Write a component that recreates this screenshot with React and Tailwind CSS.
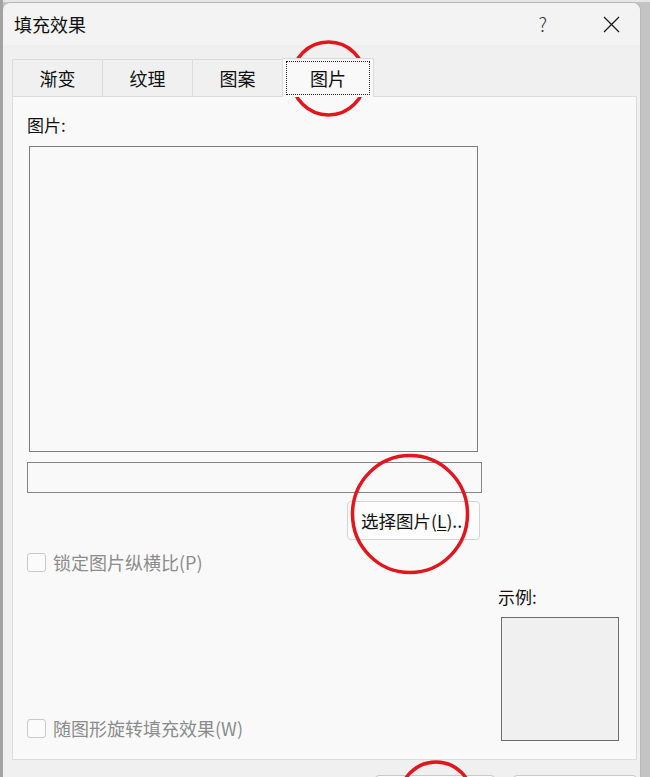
import React from "react";

const font = { fontFamily: '"Noto Sans CJK SC", "Noto Sans", sans-serif' };

const tabs = ["渐变", "纹理", "图案", "图片"];

const Check = ({ label }) => (
  <div className="flex items-center h-[19px]">
    <div className="w-[19px] h-[19px] rounded-[3px] border border-[#c9c9c9] bg-[#fbfbfb]" />
    <span className="ml-[7px] text-[18px] leading-[19px] text-[#8c8c8c] whitespace-nowrap">{label}</span>
  </div>
);

export default function App() {
  return (
    <div
      className="relative w-[650px] h-[777px] overflow-hidden bg-[#c4c4c4] border-l-[3px] border-[#a3a3a3]"
      style={font}
    >
      {/* window behind, barely visible */}
      <div className="h-[2px] bg-[#e6e6e6]" />

      <div className="w-[638px] bg-[#f0f0f0] rounded-t-[8px] border-t border-r border-[#b8b8b8] flex flex-col">
        {/* title bar */}
        <div className="shrink-0 h-[42px] flex items-center bg-[#f3f3f3] rounded-t-[8px]">
          <span className="ml-[11px] text-[18px] leading-[24px] text-[#111]">填充效果</span>
          <span className="ml-auto mr-[56px] text-[19px] leading-[24px] text-[#333] font-light">?</span>
          <svg className="mr-[20px]" width="17" height="17" viewBox="0 0 17 17">
            <path d="M1 1 L16 16 M16 1 L1 16" stroke="#1b1b1b" strokeWidth="1.3" fill="none" />
          </svg>
        </div>

        {/* tabs */}
        <div className="shrink-0 mt-[13px] ml-[9px] flex h-[38px] items-end">
          {tabs.map((t, i) => {
            const active = i === 3;
            return (
              <div
                key={t}
                className={
                  active
                    ? "relative z-10 w-[92px] h-[39px] -mb-px bg-[#f9f9f9] border border-b-0 border-[#dadada] flex items-center justify-center"
                    : "w-[90px] h-[37px] bg-[#f0f0f0] border-t border-l border-[#dcdcdc] flex items-center justify-center"
                }
              >
                {active ? (
                  <div className="w-[84px] h-[34px] border border-dotted border-[#222] flex items-center justify-center">
                    <span className="text-[18px] leading-[24px] text-[#111]">{t}</span>
                  </div>
                ) : (
                  <span className="text-[18px] leading-[24px] text-[#111]">{t}</span>
                )}
              </div>
            );
          })}
        </div>

        {/* panel */}
        <div className="shrink-0 ml-[9px] w-[625px] h-[664px] bg-[#f9f9f9] border border-[#dcdcdc] pl-[14px] pt-[16px] flex flex-col">
          <span className="text-[17px] leading-[24px] text-[#111]">图片:</span>
          <div className="mt-[9px] ml-[2px] w-[449px] h-[306px] border border-[#7d7d7d] bg-[#f9f9f9]" />
          <div className="mt-[10px] w-[455px] h-[31px] border border-[#858585] bg-[#f9f9f9]" />
          <button className="mt-[8px] ml-[320px] w-[133px] h-[39px] rounded-[4px] border border-[#d3d3d3] bg-[#fdfdfd] flex items-center pl-[13px]">
            <span className="text-[17.5px] leading-[24px] text-[#111] whitespace-nowrap">
              选择图片(<span className="underline underline-offset-2">L</span>)..
            </span>
          </button>
          <div className="mt-[13px]">
            <Check label="锁定图片纵横比(P)" />
          </div>
          <div className="mt-[13px] flex items-end">
            <div className="flex-1 pb-[3px]">
              <Check label="随图形旋转填充效果(W)" />
            </div>
            <div className="w-[138px] flex flex-col">
              <span className="text-[17px] leading-[24px] text-[#111]">示例:</span>
              <div className="mt-[8px] ml-[3px] w-[118px] h-[124px] bg-[#f0f0f0] border border-[#6c6c6c]" />
            </div>
          </div>
        </div>

        {/* bottom buttons, cut off by the screenshot */}
        <div className="shrink-0 mt-[15px] flex">
          <div className="ml-[372px] w-[120px] h-[34px] rounded-[4px] border border-[#c8c8c8] bg-[#fdfdfd]" />
          <div className="ml-[18px] w-[124px] h-[34px] rounded-[4px] border border-[#c8c8c8] bg-[#fdfdfd]" />
        </div>
      </div>

      {/* red annotation circles */}
      <svg className="absolute left-[-3px] top-0 pointer-events-none" width="650" height="777">
        <ellipse cx="328.5" cy="78.5" rx="36.5" ry="36.5" fill="none" stroke="#e3151d" strokeWidth="3.5" />
        <ellipse cx="410" cy="514" rx="57.5" ry="58.5" fill="none" stroke="#e3151d" strokeWidth="3.5" />
        <ellipse cx="436" cy="798" rx="36" ry="36" fill="none" stroke="#e3151d" strokeWidth="3.5" />
      </svg>
    </div>
  );
}
